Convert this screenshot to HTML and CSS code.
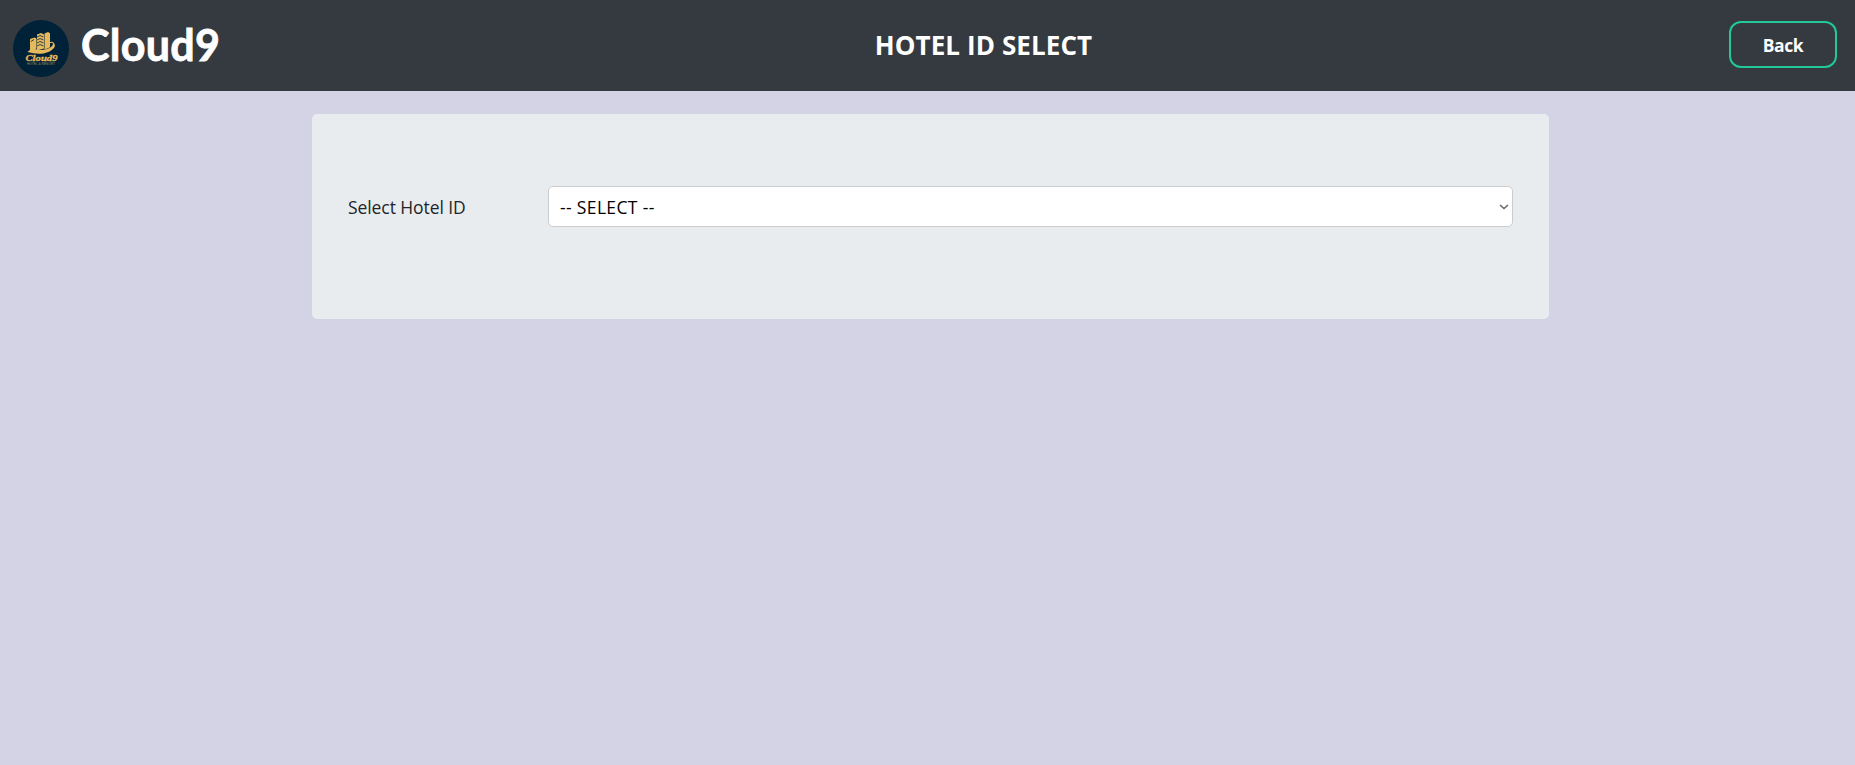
FILE: index.html
```html
<!DOCTYPE html>
<html lang="en">
<head>
<meta charset="utf-8">
<title>Hotel ID Select</title>
<link rel="stylesheet" href="styles.css">
</head>
<body>
<header class="navbar">
  <div class="brand">
    <svg class="logo" viewBox="0 0 56 57" aria-hidden="true">
      <ellipse cx="28" cy="28.500" rx="28" ry="28.500" fill="#002238"/>
      <g fill="#e5b95c">
        <path d="M17 19l4.500-1.500 2 1v10l-6.500 3z"/>
        <path d="M24 14.500l4-1.500 3 1.500v14l-7 2z"/>
        <path d="M31.500 13.500l3.500-1.500 2 1.200v14l-5.500 2.500z"/>
        <path d="M14.500 32q2-3 6-3.500l5 1.500q7 .5 11-2 4.500-2.500 3-5.500 4 2 1.500 5.500-3.500 4-10.500 5.500-8 1-16-1.500z"/>
      </g>
      <path d="M24 17l3-1.500 3.500 1.500M24 20l3-1.500 3.500 1.500M24 23l3-1.500 3.500 1.500M24 26l3-1.500 3.500 1.500M18 21.500l3-2" fill="none" stroke="#002238" stroke-width=".8"/>
      <path d="M37 22.500q4-1 4 1.500" fill="none" stroke="#e5b95c"/>
      <text class="logo-name" x="12.500" y="40.500" textLength="32" lengthAdjust="spacingAndGlyphs">Cloud9</text>
      <text class="logo-tag" x="14" y="44.500" textLength="28" lengthAdjust="spacingAndGlyphs">HOTEL &amp; RESORT</text>
    </svg>
    <span class="brand-name">Cloud9</span>
  </div>
  <h1 class="title">HOTEL ID SELECT</h1>
  <button class="back" type="button">Back</button>
</header>
<main class="card">
  <label class="label" for="hotel">Select Hotel ID</label>
  <div class="field">
    <select class="select" id="hotel"><option>-- SELECT --</option></select>
    <svg class="chevron" viewBox="0 0 10 6" aria-hidden="true"><path d="M1 1l4 3.500L9 1"/></svg>
  </div>
</main>
</body>
</html>
```
FILE: styles.css
```css
* { box-sizing: border-box; }
body {
  margin: 0;
  min-height: 100vh;
  background: #d4d3e5;
  font-family: "Open Sans", "Noto Sans", sans-serif;
  color: #212529;
}
.navbar {
  display: flex;
  align-items: flex-start;
  justify-content: space-between;
  height: 91px;
  padding: 0 18px 0 13px;
  background: #343a40;
  color: #fff;
}
.brand { display: flex; align-items: flex-start; width: 225px; }
.logo { width: 56px; height: 57px; margin-top: 20px; }
.logo-name { font: italic bold 8.500px "Liberation Serif", serif; fill: #e5b95c; stroke: #e5b95c; stroke-width: .3px; }
.logo-tag { font: 3.500px "Liberation Sans", sans-serif; fill: #a58f5b; }
.brand-name {
  margin: 19px 0 0 12px;
  font: 700 43px/52px Lato, sans-serif;
  letter-spacing: .3px;
  -webkit-text-stroke: .8px #fff;
}
.title {
  margin: 27px 0 0;
  font-size: 26px;
  line-height: 36px;
  font-weight: 700;
  letter-spacing: .1px;
  white-space: nowrap;
}
.back {
  width: 108px;
  height: 47px;
  margin-top: 21px;
  padding: 0;
  border: 2px solid #20c997;
  border-radius: 12px;
  background: transparent;
  color: #fff;
  font: 700 17.500px/24px "Open Sans", sans-serif;
  letter-spacing: -.4px;
}
.card {
  display: flex;
  align-items: flex-start;
  width: 1237px;
  height: 205px;
  margin: 23px 0 0 312px;
  padding: 72px 36px 0;
  border-radius: 5px;
  background: #e9ecef;
}
.label {
  width: 200px;
  line-height: 42px;
  font-size: 17.500px;
  letter-spacing: -.08px;
}
.field { display: grid; align-items: center; flex: 1; height: 41px; }
.select {
  grid-area: 1 / 1;
  width: 100%;
  height: 41px;
  padding: 0 11px;
  appearance: none;
  border: 1px solid #ccc;
  border-radius: 5px;
  background: #fff;
  color: #000;
  font: 17.500px/24px "Open Sans", sans-serif;
  letter-spacing: .35px;
}
.chevron {
  grid-area: 1 / 1;
  justify-self: end;
  width: 10px;
  height: 6px;
  margin-right: 4px;
  pointer-events: none;
}
.chevron path { fill: none; stroke: #666; stroke-width: 1.500; }
```
